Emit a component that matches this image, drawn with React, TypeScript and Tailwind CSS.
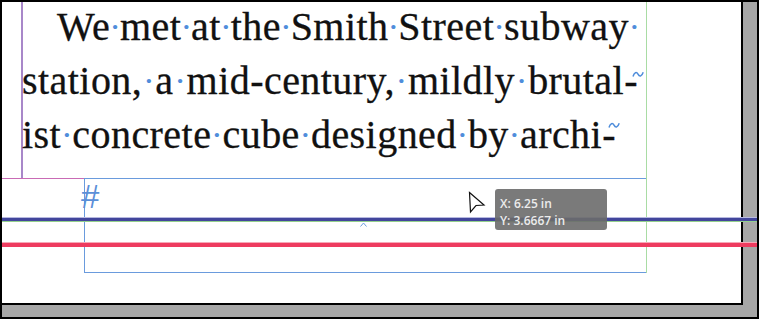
import React from "react";

const Dot = () => (
  <span className="text-[26px] font-bold text-[#4f8ddb] [-webkit-text-stroke:0px] tracking-normal">·</span>
);

const Tilde = ({ cls }: { cls: string }) => (
  <svg className={"absolute " + cls} width="12" height="9" viewBox="0 0 12 9">
    <path d="M1 6.5 C2.3 2, 4.6 1.6, 6 4.2 S 9.6 7, 11.2 2.2" fill="none" stroke="#4f8ddb" strokeWidth="1.5" />
  </svg>
);

function Line({
  words,
  className,
  tail,
}: {
  words: string[];
  className: string;
  tail?: React.ReactNode;
}) {
  const items: React.ReactNode[] = [];
  words.forEach((w, i) => {
    if (i > 0) items.push(<Dot key={"d" + i} />);
    if (i === words.length - 1 && tail) {
      items.push(
        <span key={"w" + i} className="relative">
          {w}
          {tail}
        </span>
      );
    } else {
      items.push(<span key={"w" + i}>{w}</span>);
    }
  });
  return (
    <div className={"flex justify-between h-[54px] leading-[54px] whitespace-nowrap " + className}>
      {items}
    </div>
  );
}

export default function App() {
  return (
    <div className="relative w-[759px] h-[319px] bg-[#a7a7a7] border-2 border-black overflow-hidden">
      {/* page */}
      <div className="w-[741px] h-[303px] bg-white border-r-2 border-b-2 border-black">
        {/* column bounded by the green guide */}
        <div className="flex flex-col w-[645px] h-[271px] border-r border-[#a9dca4]">
          {/* first text frame, purple margin guide on its left */}
          <div className="h-[176px] ml-[19px] border-l-2 border-[#a887c9]">
            <div className="-mt-[2px] text-[40px] tracking-[0.45px] text-[#111] font-['Liberation_Serif',serif] [-webkit-text-stroke:0.3px_#111]">
              <Line
                words={["We", "met", "at", "the", "Smith", "Street", "subway"]}
                className="ml-[34px] w-[572px]"
                tail={
                  <span className="absolute left-full top-0 ml-[1px] text-[26px] font-bold text-[#4f8ddb] [-webkit-text-stroke:0px] tracking-normal">
                    ·
                  </span>
                }
              />
              <Line
                words={["station,", "a", "mid-century,", "mildly", "brutal-"]}
                className="-ml-[1px] w-[616px]"
                tail={<Tilde cls="right-[-6px] top-[16px]" />}
              />
              <Line
                words={["ist", "concrete", "cube", "designed", "by", "archi-"]}
                className="-ml-[1px] w-[594px]"
                tail={<Tilde cls="right-[-4px] top-[13px]" />}
              />
            </div>
          </div>
          {/* bottom row: pink line + second frame */}
          <div className="flex">
            <div className="w-[82px] h-px bg-[#c96bb5]" />
            <div className="flex-1 h-[95px] border border-r-0 border-[#6a9bdd]">
              <div className="flex flex-col">
                <span className="-ml-[4px] mt-[5px] h-[26px] text-[33px] leading-[26px] text-[#5b8fd8] font-['Liberation_Sans',sans-serif]">
                  #
                </span>
                <svg className="ml-[274px] mt-[10px]" width="10" height="8" viewBox="0 0 10 8">
                  <polyline points="1.5,6.5 4.5,3 7.5,6.5" fill="none" stroke="#6b9ee0" strokeWidth="1" />
                </svg>
              </div>
            </div>
          </div>
        </div>
      </div>

      {/* horizontal ruler guides (overlay, full width) */}
      <div className="absolute left-0 right-0 top-[215px] flex flex-col">
        <div className="h-px bg-[#b7b9e0]" />
        <div className="h-[3px] bg-[#42469c]" />
        <div className="h-px bg-[#93cf8d]" />
        <div className="h-[20px]" />
        <div className="h-px bg-[#f6a9b7]" />
        <div className="h-[4px] bg-[#ee3b5f]" />
      </div>

      {/* cursor */}
      <svg className="absolute left-[463px] top-[186px]" width="24" height="28" viewBox="0 0 24 28">
        <polygon
          points="4.5,4.5 19,17 11,17.5 5.5,24"
          fill="#fff"
          stroke="#111"
          strokeWidth="1.2"
          strokeLinejoin="miter"
        />
      </svg>

      {/* tooltip */}
      <div className="absolute left-[493px] top-[187px] w-[112px] h-[41px] rounded-[3px] bg-[#6c6c6c]/90 px-[5px] pt-[6px] font-['Open_Sans',sans-serif] text-[12px] font-semibold leading-[17px] text-[#ececec]">
        <div>X: 6.25 in</div>
        <div>Y: 3.6667 in</div>
      </div>
    </div>
  );
}
